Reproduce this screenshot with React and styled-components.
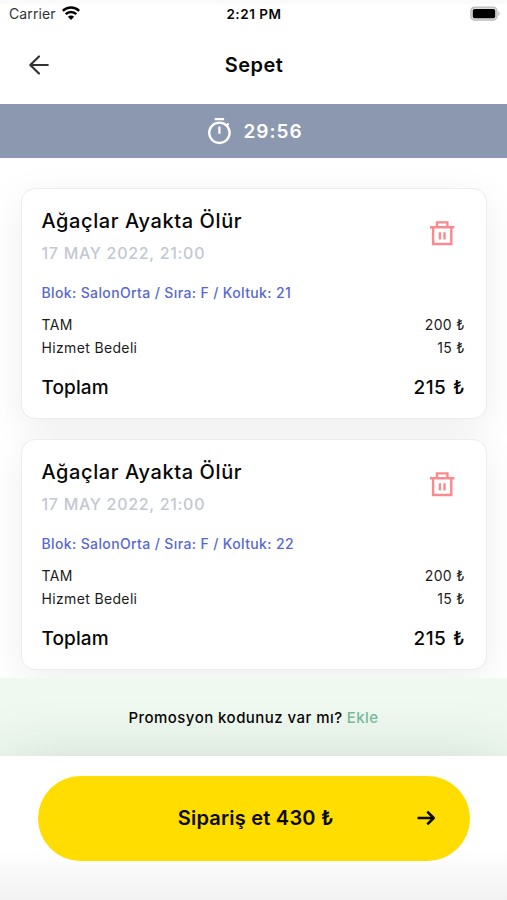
import React from "react";
import styled, { createGlobalStyle } from "styled-components";

const GlobalStyle = createGlobalStyle`
  * {
    box-sizing: border-box;
  }
  body {
    margin: 0;
    background: #fff;
    color: #080808;
    font-family: Inter, "Liberation Sans", sans-serif;
  }
`;

const Screen = styled.div`
  display: flex;
  flex-direction: column;
  width: 507px;
  height: 900px;
  overflow: hidden;
  background: #fff;
`;

const StatusBar = styled.div`
  display: grid;
  grid-template-columns: 1fr auto 1fr;
  align-items: center;
  height: 28px;
  padding: 0 6px 0 9px;
  background: linear-gradient(#fafafa 0, #fafafa 3px, #fff 5px);
`;

const Carrier = styled.div`
  display: flex;
  align-items: center;
  gap: 6px;
  margin-top: -1px;
  font-size: 14px;
  letter-spacing: 0.1px;
  color: #333;

  svg {
    margin-top: -1px;
  }
`;

const Clock = styled.div`
  margin-right: 2px;
  font-size: 13.5px;
  font-weight: 600;
  letter-spacing: 0.55px;
`;

const Battery = styled.svg`
  justify-self: end;
  margin-top: -2px;
`;

const Header = styled.header`
  display: grid;
  grid-template-columns: 24px 1fr 24px;
  align-items: center;
  height: 76px;
  padding: 0 26px 3px 27px;
`;

const Heading = styled.h1`
  margin: 0;
  text-align: center;
  font-size: 20px;
  font-weight: 600;
  letter-spacing: 0.5px;
`;

const Timer = styled.div`
  display: flex;
  align-items: center;
  justify-content: center;
  gap: 11px;
  height: 54px;
  padding-left: 2px;
  background: #8c98b0;
  color: #fff;
  font-size: 19px;
  font-weight: 600;
  letter-spacing: 1px;
`;

const List = styled.main`
  display: flex;
  flex-direction: column;
  gap: 20.5px;
  height: 520px;
  padding: 30px 20px 0 20.5px;
  overflow: hidden;
`;

const Card = styled.section`
  flex: none;
  height: 230.5px;
  padding: 20px 21px 0 20px;
  border: 1px solid #ececed;
  border-radius: 14px;
  background: #fff;
  box-shadow: 0 10px 40px rgba(0, 0, 0, 0.07);
`;

const CardTop = styled.div`
  display: flex;
  justify-content: space-between;
  height: 71px;
`;

const Title = styled.h2`
  margin: 0;
  font-size: 20px;
  line-height: 25px;
  font-weight: 500;
  letter-spacing: 0.6px;
`;

const EventDate = styled.div`
  margin-top: 9px;
  font-size: 16px;
  line-height: 20px;
  font-weight: 500;
  letter-spacing: 0.7px;
  color: #c3c8d1;
`;

const TrashIcon = styled.svg`
  margin: 9px 8.5px 0 0;
`;

const Seat = styled.div`
  margin-top: 3px;
  font-size: 14px;
  line-height: 20px;
  font-weight: 500;
  letter-spacing: 0.37px;
  color: #5868cf;
`;

const Prices = styled.div`
  margin-top: 11px;
`;

const PriceRow = styled.div`
  display: flex;
  justify-content: space-between;
  font-size: 14px;
  line-height: 22.5px;
  letter-spacing: 0.35px;
  color: #1c1c1c;
`;

const TotalRow = styled.div`
  display: flex;
  justify-content: space-between;
  margin-top: 16px;
  font-size: 19px;
  line-height: 26px;
  font-weight: 500;
  letter-spacing: 0.1px;
`;

const TotalAmount = styled.span`
  letter-spacing: 0.5px;
  word-spacing: 1px;
`;

const Promo = styled.div`
  display: flex;
  align-items: center;
  justify-content: center;
  gap: 4px;
  height: 78px;
  background: #eff9f0;
  font-size: 15px;
  font-weight: 500;
  letter-spacing: 0.46px;
`;

const PromoLink = styled.span`
  color: #78bd98;
`;

const Footer = styled.footer`
  position: relative;
  height: 144px;
  padding: 19.5px 37px 0 37.5px;
  background: linear-gradient(#fff 65%, #f2f2f3 100%);
  box-shadow: 0 12px 70px rgba(20, 40, 35, 0.2);
`;

const OrderButton = styled.button`
  display: grid;
  grid-template-columns: 24px 1fr 24px;
  align-items: center;
  width: 100%;
  height: 85.5px;
  padding: 0 32px 0 34px;
  border: 0;
  border-radius: 43px;
  background: #ffdd00;
  color: #0c0b00;
  font-family: inherit;
  font-size: 20px;
  font-weight: 600;
  letter-spacing: 0.22px;
`;

const ButtonLabel = styled.span`
  grid-column: 2;
  padding-left: 2px;
`;

const tickets = [
  { id: 1, seat: 21 },
  { id: 2, seat: 22 },
];

const Ticket = ({ seat }) => (
  <Card>
    <CardTop>
      <div>
        <Title>Ağaçlar Ayakta Ölür</Title>
        <EventDate>17 MAY 2022, 21:00</EventDate>
      </div>
      <TrashIcon
        width="30"
        height="30"
        viewBox="0 0 30 30"
        fill="none"
        stroke="#f98b8e"
        strokeWidth="2.4"
      >
        <path d="M3 9.2h24.4M6.1 9.2V26h18.2V9.2M10 9V4.4h10.4V9M12.9 14.2v7.3M17.5 14.2v7.3" />
      </TrashIcon>
    </CardTop>
    <Seat>Blok: SalonOrta / Sıra: F / Koltuk: {seat}</Seat>
    <Prices>
      <PriceRow>
        <span>TAM</span>
        <span>200 ₺</span>
      </PriceRow>
      <PriceRow>
        <span>Hizmet Bedeli</span>
        <span>15 ₺</span>
      </PriceRow>
    </Prices>
    <TotalRow>
      <span>Toplam</span>
      <TotalAmount>215 ₺</TotalAmount>
    </TotalRow>
  </Card>
);

const App = () => {
  return (
    <Screen>
      <GlobalStyle />
      <StatusBar>
        <Carrier>
          Carrier
          <svg width="18" height="14" viewBox="0 0 18 14" fill="none" stroke="#000" strokeWidth="2.5">
            <path d="M.8 4.9a11.6 11.6 0 0 1 16.4 0M3.7 8.2a7.5 7.5 0 0 1 10.6 0" />
            <path d="M9 13.9 5.9 10.8a4.4 4.4 0 0 1 6.2 0z" fill="#000" stroke="none" />
          </svg>
        </Carrier>
        <Clock>2:21 PM</Clock>
        <Battery width="31" height="15" viewBox="0 0 31 15">
          <rect x=".9" y="1.1" width="26" height="13" rx="3.8" fill="#ddd" stroke="#bbb" strokeWidth="1.3" />
          <rect x="2.8" y="3" width="22.4" height="9.2" rx="1.8" fill="#000" />
          <path d="M28.3 5.3c1.8.7 1.8 3.9 0 4.6z" fill="#b5b5b5" />
        </Battery>
      </StatusBar>
      <Header>
        <svg width="24" height="24" viewBox="0 0 24 24" fill="none" stroke="#333" strokeWidth="2.2" strokeLinecap="round" strokeLinejoin="round">
          <path d="M20.8 12H3.5M12 3.5 3.3 12l8.7 8.5" />
        </svg>
        <Heading>Sepet</Heading>
      </Header>
      <Timer>
        <svg width="26" height="28" viewBox="0 0 26 28" fill="none" stroke="#fff" strokeWidth="2.3">
          <circle cx="13.4" cy="15.8" r="10.2" />
          <path d="M8.7 2.2h9.4M13.4 9.5v7.3M20.4 8.8l2.2-2.2" />
        </svg>
        <span>29:56</span>
      </Timer>
      <List>
        {tickets.map((ticket) => (
          <Ticket key={ticket.id} seat={ticket.seat} />
        ))}
      </List>
      <Promo>
        <span>Promosyon kodunuz var mı?</span>
        <PromoLink>Ekle</PromoLink>
      </Promo>
      <Footer>
        <OrderButton>
          <ButtonLabel>Sipariş et 430 ₺</ButtonLabel>
          <svg width="24" height="24" viewBox="0 0 24 24" fill="none" stroke="#0c0b00" strokeWidth="2.6" strokeLinejoin="round">
            <path d="M3.5 12h16M13.3 5.6 19.7 12l-6.4 6.4" />
          </svg>
        </OrderButton>
      </Footer>
    </Screen>
  );
};

export default App;
